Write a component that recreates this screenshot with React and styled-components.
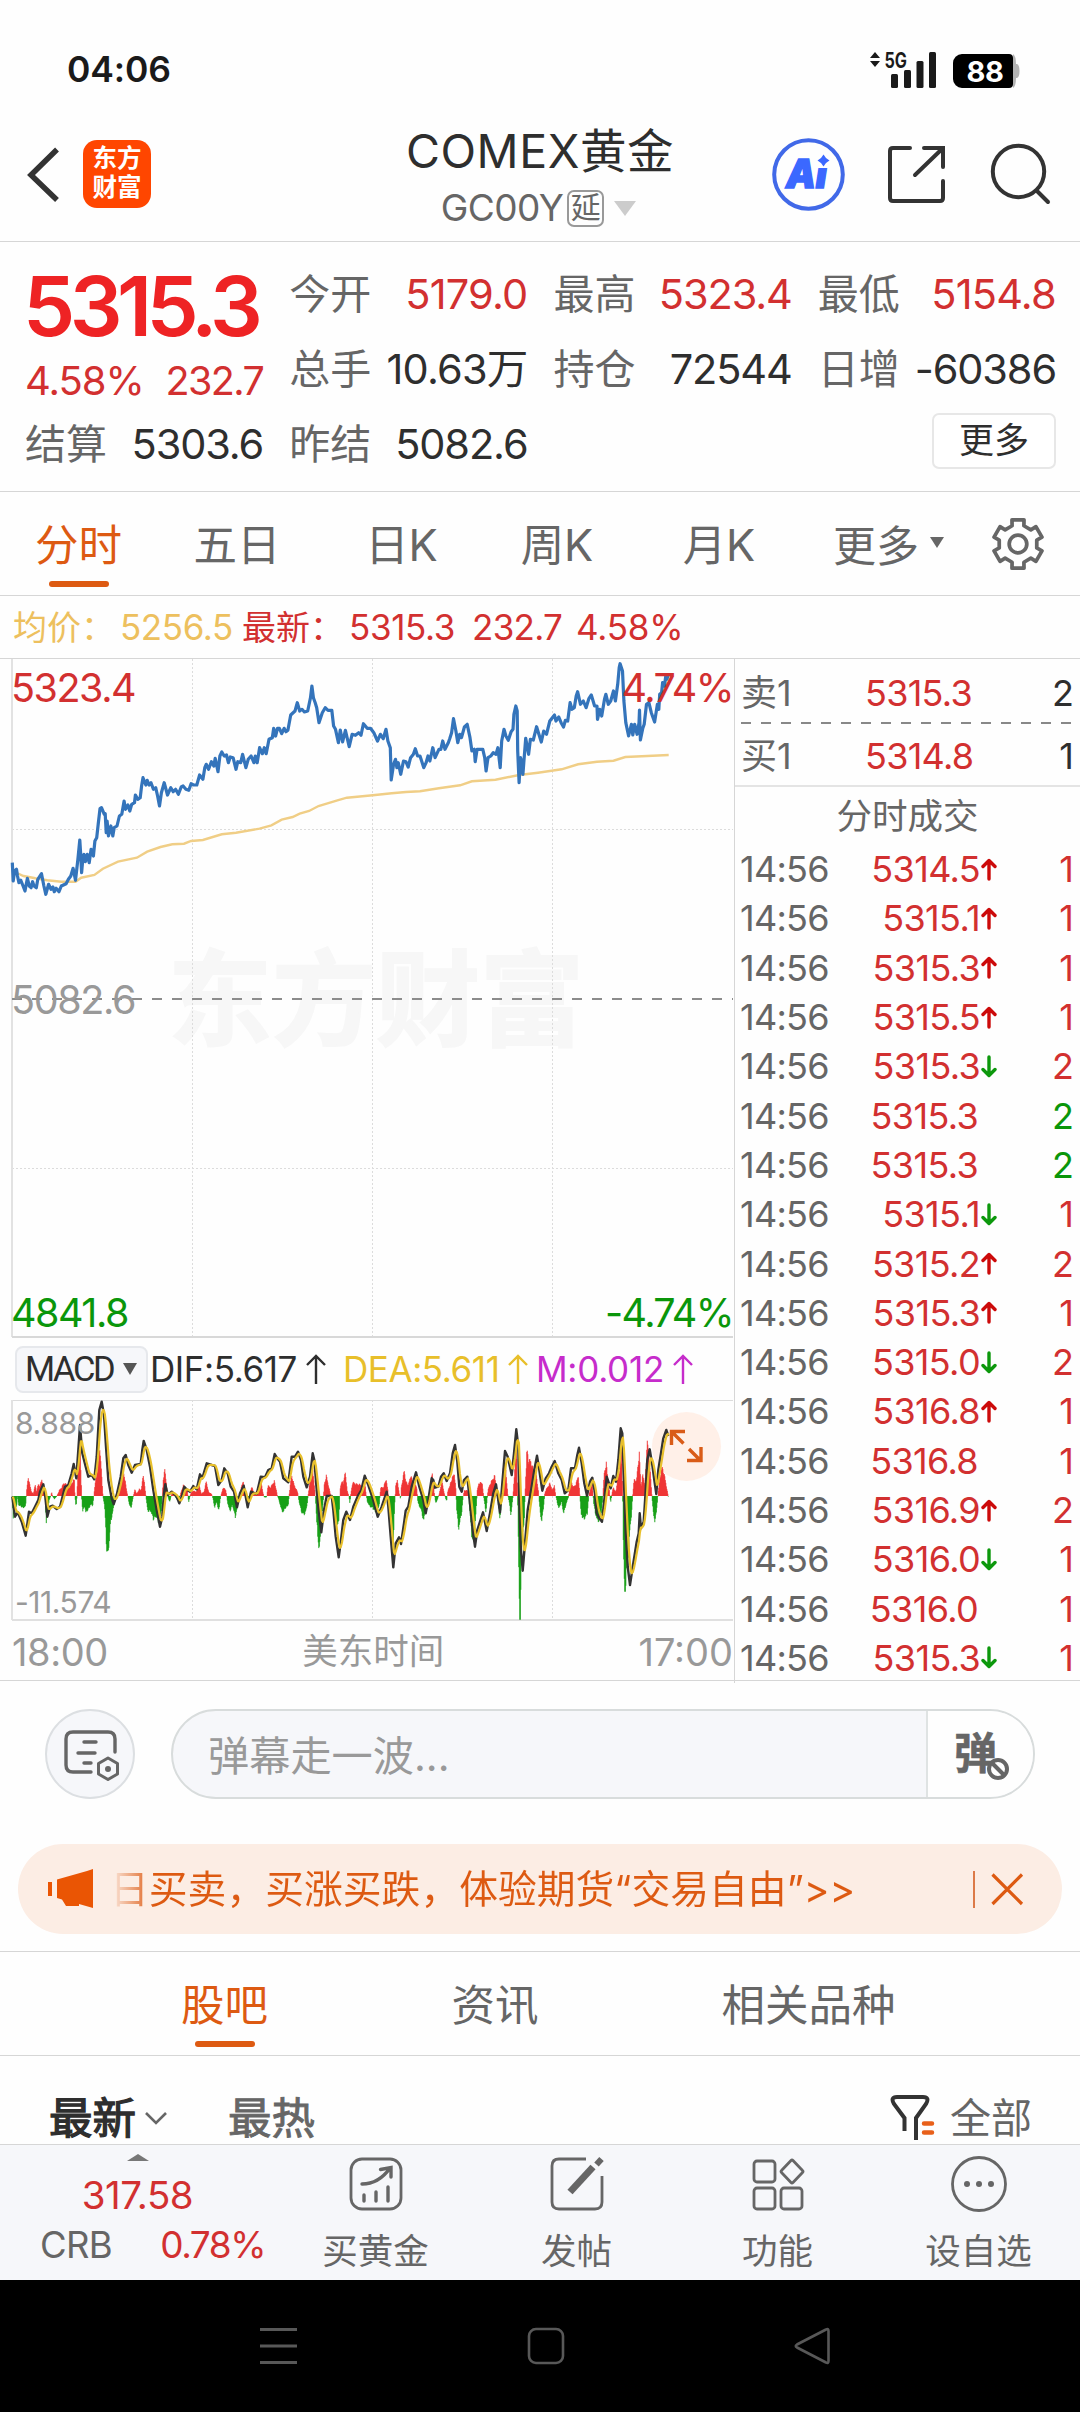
import React from "react";
import styled, { createGlobalStyle } from "styled-components";

const GlobalStyle = createGlobalStyle`
  * { box-sizing: border-box; }
  body { margin: 0; background: #fefefe; }
`;

const RED = "#d23030";
const GREEN = "#0a960a";
const ORANGE = "#dd5a12";
const INK = "#2e2e2e";
const GREY = "#666";
const LINE = "#d6d6d6";

const Screen = styled.div`
  width: 1080px;
  height: 2412px;
  display: flex;
  flex-direction: column;
  overflow: hidden;
  background: #fefefe;
  color: ${INK};
  font-family: Inter, "Noto Sans CJK SC", sans-serif;
  white-space: nowrap;
`;

const T = styled.span`
  display: block;
  font-size: ${(p) => p.$s}px;
  line-height: ${(p) => p.$lh || Math.round(p.$s * 1.2)}px;
  color: ${(p) => p.$c || "inherit"};
  font-weight: ${(p) => p.$w || 400};
  letter-spacing: ${(p) => (p.$ls === undefined ? 0 : p.$ls)}em;
  -webkit-text-stroke: ${(p) => p.$stroke || 0}px currentColor;
`;

/* status bar */
const StatusBar = styled.div`
  height: 106px;
  padding: 34px 60px 0 67px;
  display: flex;
  justify-content: space-between;
  align-items: flex-start;
`;
const StatusRight = styled.div`
  display: flex;
  align-items: flex-start;
  padding-top: 9px;
`;
const Battery = styled.div`
  width: 60px;
  height: 34px;
  margin-top: 11px;
  margin-left: 17px;
  border-radius: 9px 4px 4px 9px;
  background: #000;
  color: #fff;
  display: flex;
  align-items: center;
  justify-content: center;
  font-size: 29px;
  font-weight: 700;
  letter-spacing: -0.01em;
  padding-left: 4px;
`;
const BatteryTip = styled.svg`
  margin-top: 11px;
`;

/* header */
const Header = styled.header`
  height: 136px;
  border-bottom: 1px solid ${LINE};
  display: grid;
  grid-template-columns: 300px 1fr 300px;
`;
const HeaderLeft = styled.div`
  display: flex;
  padding: 34px 0 0 26px;
`;
const Logo = styled.div`
  width: 68px;
  height: 68px;
  margin-left: 23px;
  border-radius: 14px;
  background: #ff4600;
  color: #fff;
  text-align: center;
  font-size: 24.5px;
  line-height: 29px;
  font-weight: 700;
  padding-top: 4px;
`;
const TitleBlock = styled.div`
  display: flex;
  flex-direction: column;
  align-items: center;
  padding-top: 16px;
`;
const SubTitle = styled.div`
  display: flex;
  align-items: center;
  height: 40px;
  margin-top: 8px;
  padding-right: 3px;
`;
const DelayTag = styled.span`
  width: 37px;
  height: 37px;
  margin: 0 10px 0 4px;
  border: 2px solid #999;
  border-radius: 7px;
  color: ${GREY};
  font-size: 30px;
  line-height: 31px;
  text-align: center;
`;
const Caret = styled.i`
  width: 0;
  height: 0;
  border: ${(p) => p.$x}px solid transparent;
  border-top: ${(p) => p.$y}px solid ${(p) => p.$c};
  border-bottom: 0;
`;
const HeaderRight = styled.div`
  display: flex;
  justify-content: flex-end;
  padding: 32px 28px 0 0;
  svg { flex-shrink: 0; }
`;

/* quote */
const Quote = styled.section`
  height: 250px;
  border-bottom: 1px solid ${LINE};
  padding: 14px 24px 0 25px;
  display: grid;
  grid-template-columns: repeat(4, 1fr);
  grid-template-rows: 75px 75px 75px;
  column-gap: 26px;
`;
const QuoteMain = styled.div`
  grid-row: span 2;
  padding-top: 1px;
`;
const LastPrice = styled(T)`
  margin-left: -2px;
`;
const Between = styled.div`
  display: flex;
  justify-content: space-between;
  align-items: center;
`;
const Cell = styled(Between)`
  height: 75px;
`;
const MoreCell = styled.div`
  grid-column: 4;
  padding-top: 7px;
  display: flex;
  justify-content: flex-end;
`;
const MoreButton = styled.button`
  width: 124px;
  height: 56px;
  padding: 0 0 2px;
  border: 2px solid #e7e7e7;
  border-radius: 7px;
  background: #fff;
  color: ${INK};
  font: 400 35px/50px Inter, "Noto Sans CJK SC", sans-serif;
`;

/* period tabs */
const Tabs = styled.nav`
  height: ${(p) => p.$h}px;
  border-bottom: 1px solid ${LINE};
  display: flex;
`;
const Tab = styled.div`
  width: ${(p) => p.$w}px;
  padding-top: ${(p) => p.$top}px;
  display: flex;
  flex-direction: column;
  align-items: center;
  font-size: 43.5px;
  line-height: 60px;
  color: ${(p) => (p.$on ? ORANGE : GREY)};
  &::after {
    content: "";
    width: 60px;
    height: 6px;
    margin-top: 6px;
    border-radius: 3px;
    background: ${(p) => (p.$on ? ORANGE : "transparent")};
  }
`;
const TabMore = styled.div`
  display: flex;
  align-items: center;
  gap: 11px;
  height: 101px;
  width: 180px;
  padding: 0 0 0 23px;
  font-size: 43px;
  color: ${GREY};
`;
const Gear = styled.svg`
  margin-top: 24px;
`;

/* info line */
const InfoLine = styled.div`
  height: 63px;
  border-bottom: 1px solid ${LINE};
  display: flex;
  align-items: center;
  padding-left: 13px;
`;
const InfoItem = styled(T)`
  width: ${(p) => p.$width}px;
`;

/* market */
const Market = styled.section`
  height: 1022px;
  border-bottom: 1px solid ${LINE};
  display: grid;
  grid-template-columns: 734px 1fr;
`;
const ChartColumn = styled.div`
  display: flex;
  flex-direction: column;
`;
const Pane = styled.div`
  position: relative;
  height: ${(p) => p.$h}px;
`;
const ChartSvg = styled.svg`
  display: block;
  position: relative;
`;
const Mark = styled(T)`
  position: absolute;
  left: ${(p) => (p.$l === undefined ? "auto" : p.$l + "px")};
  right: ${(p) => (p.$r === undefined ? "auto" : p.$r + "px")};
  top: ${(p) => p.$t}px;
`;
const MacdBar = styled.div`
  height: 61px;
  display: flex;
  align-items: center;
  padding: 0 0 1px 15px;
`;
const MacdSelect = styled.div`
  width: 133px;
  height: 47px;
  border: 2px solid #e6e8ec;
  border-radius: 8px;
  background: #f6f7fa;
  display: flex;
  align-items: center;
  gap: 12px;
  padding-left: 8px;
  margin-right: 2px;
`;
const Squeezed = styled(T)`
  width: 86px;
  font-family: Roboto, sans-serif;
`;
const Indicator = styled.div`
  display: flex;
  align-items: center;
  width: ${(p) => p.$width}px;
  color: ${(p) => p.$c};
  gap: 9px;
`;
const TimeAxis = styled(Between)`
  height: 59px;
  padding: 0 1px 0 12px;
`;

/* trades */
const Side = styled.aside`
  border-left: 1px solid ${LINE};
  display: flex;
  flex-direction: column;
`;
const BookRow = styled.div`
  height: ${(p) => p.$h}px;
  display: grid;
  grid-template-columns: 124px 1fr auto;
  align-items: center;
  padding: ${(p) => p.$pt}px 6px 0 6px;
`;
const Dashes = styled.div`
  height: 2px;
  margin: 0 5px 0 6px;
  background: repeating-linear-gradient(90deg, #888 0 10px, transparent 10px 20px);
`;
const TradeTitle = styled(T)`
  border-top: 2px solid #e4e4e4;
  padding-top: 4px;
  height: 60px;
  text-align: center;
`;
const TradeRow = styled.div`
  height: 49.3px;
  display: grid;
  grid-template-columns: 90px 167px 1fr;
  align-items: center;
  padding: 0 6px 0 5px;
`;
const Price = styled.div`
  display: flex;
  justify-content: flex-end;
  align-items: center;
  gap: 1px;
  padding-right: ${(p) => (p.$flat ? 19 : 0)}px;
`;
const Volume = styled(T)`
  text-align: right;
`;

/* comments */
const CommentRow = styled.div`
  height: 163px;
  padding: 28px 45px 0;
  display: flex;
  gap: 36px;
`;
const RoundButton = styled.div`
  width: 90px;
  height: 90px;
  border: 2px solid #dcdfe2;
  border-radius: 50%;
  background: #f6f7fa;
  display: flex;
  align-items: center;
  justify-content: center;
  padding: 2px 0 0 3px;
`;
const InputBox = styled.div`
  flex: 1;
  height: 90px;
  border: 2px solid #d8dcdc;
  border-radius: 45px;
  background: #f6f7fa;
  overflow: hidden;
  display: flex;
`;
const Placeholder = styled.div`
  flex: 1;
  padding-left: 35px;
  font-size: 41.2px;
  line-height: 90px;
  color: #999;
`;
const Toggle = styled.div`
  width: 107px;
  background: #fefefe;
  border-left: 2px solid #dfe3e3;
  display: flex;
  padding: 19px 0 0 26px;
`;
const ToggleSign = styled.svg`
  margin: 27px 0 0 -11px;
`;

/* notice */
const NoticeWrap = styled.div`
  height: 108px;
  padding: 0 18px;
  border-bottom: 1px solid ${LINE};
`;
const Notice = styled.div`
  height: 90px;
  border-radius: 45px;
  background: #fcede4;
  display: flex;
  align-items: center;
  padding: 0 38px 0 29px;
`;
const NoticeText = styled.div`
  flex: 1;
  margin-left: 16px;
  font-size: 38.8px;
  line-height: 60px;
  background: linear-gradient(90deg, #fcede4 0, #dd5a12 44px);
  -webkit-background-clip: text;
  background-clip: text;
  color: transparent;
`;
const NoticeLine = styled.i`
  width: 2px;
  height: 37px;
  background: #dc7a48;
  margin-right: 16px;
`;

/* sort row */
const SortRow = styled.div`
  height: 88px;
  display: flex;
  align-items: center;
  padding: 36px 48px 0 49px;
  overflow: hidden;
`;
const SortChevron = styled.svg`
  margin: 0 60px 0 8px;
`;
const Spacer = styled.i`
  flex: 1;
`;
const FilterIcon = styled.svg`
  margin-right: 14px;
`;

/* bottom bar */
const BottomBar = styled.footer`
  height: 136px;
  border-top: 1px solid ${LINE};
  background: #f6f7fa;
  display: grid;
  grid-template-columns: 275px repeat(4, 201px);
`;
const Ticker = styled.div`
  display: flex;
  flex-direction: column;
  align-items: center;
  padding: 9px 0 0;
`;
const TickerUp = styled.i`
  width: 0;
  height: 0;
  border: 11px solid transparent;
  border-bottom: 7px solid #777;
  border-top: 0;
`;
const TickerRow = styled(Between)`
  width: 225px;
  margin-left: 30px;
`;
const Action = styled.div`
  display: flex;
  flex-direction: column;
  align-items: center;
  padding-top: 11px;
  gap: 14px;
`;
const SystemNav = styled.div`
  flex: 1;
  background: #000;
  display: flex;
  padding: 45px 0 0 257px;
`;
const NavIcon = styled.svg`
  margin-right: ${(p) => p.$gap}px;
`;

/* Samples are stored in thirds of a pixel. */
const price = [26,665,28,720,31,690,35,685,37,705,40,725,44,718,48,732,53,750,58,712,62,735,66,740,69,722,72,735,77,740,80,715,88,698,93,735,97,760,100,745,103,730,108,745,112,738,115,752,119,742,125,752,130,735,140,728,145,715,150,705,155,682,160,718,165,655,169,597,171,640,173,695,176,645,178,640,181,662,185,640,189,665,193,625,198,645,201,600,205,590,208,550,212,503,215,500,221,520,223,518,225,575,227,540,230,585,235,555,239,585,242,560,248,555,253,525,258,520,263,480,266,505,271,492,275,510,279,490,285,485,287,462,292,475,297,470,300,435,303,410,309,432,312,418,316,432,320,425,325,445,330,440,334,465,338,495,342,455,348,425,355,462,362,440,367,452,372,445,378,460,384,438,388,435,394,445,400,448,405,428,410,432,417,432,423,402,430,415,434,380,437,370,442,385,448,362,453,375,456,352,462,392,466,345,470,333,475,345,480,342,484,365,488,348,494,350,500,385,504,362,510,365,514,340,521,380,526,355,532,345,538,365,541,345,545,365,550,320,556,338,560,320,564,338,570,295,577,290,580,262,584,285,588,262,592,262,597,278,602,262,606,272,610,268,616,222,625,210,630,185,635,210,640,205,645,213,652,210,658,170,661,135,664,170,668,185,671,200,676,245,683,215,689,200,695,208,703,208,707,255,711,265,717,305,721,267,726,303,732,268,740,317,746,280,753,283,760,275,765,283,770,248,778,262,785,262,792,275,800,300,806,280,812,293,818,265,822,300,827,320,829,417,834,370,838,355,841,380,844,365,849,400,855,360,860,362,865,378,870,350,876,340,880,323,885,345,890,345,898,380,903,365,907,345,911,360,917,320,922,350,930,325,934,325,938,300,943,325,950,305,953,293,957,275,961,233,966,270,970,305,974,280,978,290,984,258,990,250,996,290,1000,330,1005,325,1007,362,1011,325,1017,325,1023,325,1027,350,1030,390,1034,350,1040,345,1045,335,1051,340,1055,320,1060,380,1063,300,1068,265,1072,285,1077,298,1083,272,1087,265,1089,220,1093,195,1096,210,1097,330,1100,425,1103,350,1106,365,1108,400,1114,292,1120,340,1124,295,1130,297,1137,257,1142,280,1147,303,1152,270,1158,280,1165,240,1175,222,1178,240,1184,228,1189,245,1194,258,1198,238,1203,240,1208,185,1212,205,1217,200,1221,165,1224,152,1230,190,1236,180,1242,200,1248,172,1253,162,1260,195,1265,195,1266,235,1271,205,1275,225,1281,175,1284,160,1289,190,1294,180,1300,150,1304,180,1309,130,1312,80,1314,68,1319,90,1322,180,1326,245,1332,285,1338,250,1341,282,1345,250,1350,280,1354,245,1355,207,1357,297,1362,262,1365,250,1370,190,1375,185,1380,215,1387,243,1393,190,1396,205,1398,160,1402,155,1404,125,1408,135,1411,102,1413,115,1417,98];
const average = [26,690,50,705,75,712,100,718,130,722,160,722,172,710,200,702,218,683,250,662,290,650,312,632,340,618,365,610,390,608,405,600,430,597,470,580,500,575,550,563,575,553,597,536,620,528,635,518,655,510,675,495,715,478,735,470,790,463,830,457,860,453,890,451,930,442,975,433,1000,421,1050,416,1100,402,1140,395,1190,385,1225,370,1265,362,1300,359,1325,348,1360,346,1417,342];

const difLine = [37,320,45,380,53,367,65,395,77,437,87,365,95,370,105,350,115,330,120,305,130,283,136,320,142,380,150,350,158,347,170,357,180,350,195,290,205,285,215,250,221,222,229,265,235,180,240,105,247,190,257,230,265,260,275,255,283,268,290,200,298,60,305,35,312,75,318,170,325,270,335,325,341,342,350,315,362,260,370,205,377,195,385,225,395,248,405,225,422,222,427,180,431,153,440,180,450,230,460,300,470,360,480,410,487,380,492,310,496,283,503,315,515,305,530,320,538,340,545,320,553,290,562,300,570,305,580,288,590,298,600,253,607,265,620,220,635,225,645,228,655,285,665,270,673,235,683,250,692,290,702,305,711,352,720,310,731,287,743,352,753,305,770,312,782,260,795,262,805,240,815,235,824,192,832,205,840,215,850,265,865,277,875,200,885,200,894,185,903,210,910,260,920,292,930,260,938,190,943,210,950,300,957,370,964,427,972,360,980,318,995,318,1000,360,1007,440,1016,502,1023,450,1030,390,1039,365,1050,390,1060,350,1075,315,1084,300,1094,257,1105,285,1118,325,1133,380,1145,350,1160,305,1165,350,1172,440,1180,532,1187,460,1197,442,1203,462,1212,400,1217,362,1225,350,1235,290,1248,247,1258,290,1270,330,1277,370,1285,330,1295,265,1300,270,1305,293,1315,290,1323,260,1331,250,1340,273,1350,250,1358,190,1365,165,1372,215,1378,290,1385,305,1392,270,1402,260,1410,340,1418,420,1425,470,1432,420,1440,395,1449,367,1460,423,1470,370,1480,310,1488,283,1495,330,1500,367,1507,280,1515,183,1523,200,1535,255,1542,190,1549,118,1555,170,1558,330,1562,470,1568,542,1575,460,1583,360,1595,290,1603,240,1611,197,1618,240,1627,302,1637,265,1647,250,1655,230,1664,213,1675,250,1685,270,1694,310,1705,300,1713,235,1725,235,1732,195,1737,173,1745,220,1753,280,1761,317,1770,275,1777,263,1785,310,1790,370,1798,385,1806,395,1813,330,1820,260,1832,295,1840,258,1848,275,1855,210,1862,115,1867,130,1872,280,1877,430,1883,530,1890,585,1900,520,1910,455,1916,430,1919,370,1923,415,1931,395,1937,300,1942,210,1949,178,1957,225,1963,270,1969,312,1975,240,1983,190,1990,145,1999,120,2005,138];
const histogram = [37,319,40,390,45,345,50,355,52,320,57,350,68,355,77,352,79,320,81,290,85,255,88,275,95,305,100,310,106,283,110,305,115,280,120,285,126,262,130,290,134,310,136,330,139,405,143,360,148,330,152,320,155,305,158,319,163,328,170,320,178,300,185,290,192,275,200,280,210,290,218,270,223,265,225,320,228,355,231,320,233,250,240,120,243,250,245,320,248,370,254,350,258,375,265,360,272,345,278,350,281,325,284,290,290,250,299,175,304,230,309,319,314,350,320,485,326,480,332,400,340,360,347,320,352,310,360,275,372,245,380,300,384,319,388,345,393,360,400,320,405,295,410,312,418,295,423,300,430,250,437,310,440,340,445,370,452,365,460,395,467,380,475,400,483,380,487,320,490,260,495,230,500,290,503,310,506,330,510,335,515,310,520,305,528,325,537,335,542,310,550,283,556,290,562,300,566,338,572,310,580,300,588,305,597,283,604,310,612,305,619,270,626,305,635,312,640,330,644,358,650,335,656,370,662,320,670,290,678,300,683,340,690,370,697,345,706,385,713,350,718,325,724,290,729,270,735,305,742,350,748,325,755,285,762,310,772,300,782,260,788,300,792,322,800,322,804,285,812,290,823,268,832,315,838,335,845,365,850,370,858,355,865,345,868,310,875,250,882,280,893,305,898,340,905,370,912,380,920,360,924,320,930,270,938,235,944,290,947,330,950,400,957,480,964,410,970,330,973,280,979,252,985,280,992,315,996,330,1002,370,1010,410,1017,400,1020,300,1025,270,1030,280,1035,238,1042,300,1047,320,1050,345,1052,315,1058,275,1070,280,1080,280,1088,290,1094,265,1098,310,1102,335,1108,350,1118,358,1130,370,1138,345,1142,290,1150,290,1158,265,1164,300,1167,340,1173,380,1180,480,1184,350,1188,275,1192,270,1198,310,1202,330,1204,290,1208,265,1213,235,1218,270,1225,285,1232,252,1240,275,1250,285,1254,340,1263,360,1271,397,1280,355,1288,330,1291,290,1297,240,1302,300,1307,342,1313,328,1318,310,1326,270,1333,310,1340,337,1344,300,1352,275,1363,245,1368,300,1370,360,1376,425,1385,375,1389,325,1393,300,1403,300,1407,330,1415,440,1422,455,1428,370,1432,300,1437,275,1447,275,1451,320,1458,370,1464,300,1470,280,1477,265,1484,250,1491,300,1494,340,1500,390,1506,330,1508,260,1512,190,1518,240,1523,310,1528,340,1533,380,1539,320,1544,240,1549,130,1553,320,1556,500,1559,689,1561,689,1565,450,1572,420,1575,320,1578,240,1581,175,1586,210,1592,205,1597,225,1608,240,1615,300,1619,350,1625,403,1631,350,1635,305,1642,290,1650,275,1656,300,1663,285,1668,320,1672,340,1677,360,1685,335,1691,375,1698,345,1706,320,1710,260,1720,290,1728,280,1735,252,1740,320,1744,385,1752,390,1762,375,1767,310,1772,295,1777,275,1781,340,1786,370,1793,400,1802,390,1808,330,1812,250,1819,215,1824,270,1828,300,1832,340,1836,310,1840,290,1848,305,1852,270,1860,230,1864,160,1868,300,1870,450,1874,605,1877,605,1880,500,1883,545,1888,440,1893,400,1898,320,1902,265,1908,270,1912,240,1918,185,1923,290,1928,250,1935,280,1942,152,1948,200,1954,290,1958,350,1965,408,1972,340,1975,300,1980,260,1987,225,1995,260,2000,290,2005,320];

const pairs = (flat, sx, sy, dy) => {
  const out = [];
  for (let i = 0; i < flat.length; i += 2) out.push([flat[i] / sx, flat[i + 1] / sy + dy]);
  return out;
};
const toPath = (pts) => "M" + pts.map(([x, y]) => `${x.toFixed(1)} ${y.toFixed(1)}`).join("L");
const sample = (pts, step) => {
  const out = [];
  let k = 0;
  for (let x = pts[0][0]; x <= pts[pts.length - 1][0]; x += step) {
    while (k < pts.length - 2 && pts[k + 1][0] < x) k += 1;
    const [x0, y0] = pts[k];
    const [x1, y1] = pts[k + 1];
    out.push([x, y0 + ((y1 - y0) * (x - x0)) / (x1 - x0)]);
  }
  return out;
};
const smooth = (pts, a) => {
  let v = pts[0][1];
  return pts.map(([x, y]) => {
    v += (y - v) * a;
    return [x, v];
  });
};

const ZERO = 96;
const pricePath = toPath(pairs(price, 2.119, 3, -18));
const avgPath = toPath(pairs(average, 2.119, 3, -18));
const difPts = pairs(difLine, 3, 3, -10);
const difPath = toPath(difPts);
const deaPath = toPath(smooth(sample(difPts, 1), 0.42).map(([x, y]) => [x + 0.6, y]));
const bars = sample(pairs(histogram, 3, 3, -10), 0.5).map(([x, y], i) => {
  const wobble = Math.abs(y - ZERO) > 40 ? 1 : 1 - (((i >> 1) * 37) % 11) / 60;
  return [x, ZERO + (y - ZERO) * wobble];
});
const barPath = (up) =>
  bars
    .filter(([, y]) => (up ? y < ZERO - 0.5 : y > ZERO + 0.5))
    .map(([x, y]) => `M${x.toFixed(1)} ${ZERO}V${y.toFixed(1)}`)
    .join("");

/* The digit 1 is drawn narrow, so numbers holding it are spaced a little wider. */
const spacing = (text, base = -0.027) => base + 0.008 * (text.split("1").length - 1);

const Grid = ({ h }) => (
  <g stroke="#dcdcdc" strokeWidth="1" strokeDasharray="2 2">
    {[192.5, 372.5, 552.5].map((x) => (
      <path key={x} d={`M${x} 0V${h}`} />
    ))}
  </g>
);

const PriceChart = () => (
  <Pane $h={680}>
    <Mark $s={104} $lh={120} $w={700} $stroke={2} $c="#f7f7f7" $l={168} $t={281}>东方财富</Mark>
    <ChartSvg width="734" height="680">
      <Grid h={678} />
      <path d="M12 170.5H733M12 509.5H733" stroke="#dcdcdc" strokeDasharray="2 2" />
      <path d="M12 0V678" stroke="#e2e2e2" strokeWidth="2" />
      <path d="M12 678H733" stroke="#d8d8d8" strokeWidth="2" />
      <path d="M12 340H733" stroke="#8c8c8c" strokeWidth="2" strokeDasharray="10 10" />
      <path d={avgPath} fill="none" stroke="#f0ce86" strokeWidth="2.4" />
      <path d={pricePath} fill="none" stroke="#3474bb" strokeWidth="3.2" strokeLinejoin="round" />
    </ChartSvg>
    <Mark $s={39.5} $lh={48} $ls={-0.037} $c={RED} $l={11} $t={5}>5323.4</Mark>
    <Mark $s={39.5} $lh={48} $ls={-0.04} $c={RED} $r={1} $t={5}>4.74%</Mark>
    <Mark $s={39.5} $lh={48} $ls={-0.035} $c="#999" $l={11} $t={317}>5082.6</Mark>
    <Mark $s={39.5} $lh={48} $ls={-0.037} $c={GREEN} $l={11} $t={630}>4841.8</Mark>
    <Mark $s={39.5} $lh={48} $ls={-0.04} $c={GREEN} $r={1} $t={630}>-4.74%</Mark>
  </Pane>
);

const MacdChart = () => (
  <Pane $h={222}>
    <ChartSvg width="734" height="222">
      <Grid h={220} />
      <path d="M12 .5H733" stroke="#dcdcdc" />
      <path d="M12 0V220" stroke="#e2e2e2" strokeWidth="2" />
      <path d="M12 220H733" stroke="#e0e0e0" strokeWidth="2" />
      <circle cx="686.500" cy="46.500" r="34.500" fill="#fff0e8" />
      <path d={barPath(true)} stroke="#ee2a2a" strokeWidth="0.9" />
      <path d={barPath(false)} stroke="#0a9a0a" strokeWidth="0.9" />
      <path d={difPath} fill="none" stroke="#333" strokeWidth="2.4" strokeLinejoin="round" />
      <path d={deaPath} fill="none" stroke="#e8c02c" strokeWidth="2.2" strokeLinejoin="round" />
      <path
        d="M671.500 45V31.500H685M672 32L683.500 43.500M701 47V60.500H687M689 49L700 60"
        fill="none"
        stroke="#d95c18"
        strokeWidth="3.400"
      />
    </ChartSvg>
    <Mark $s={30} $lh={36} $ls={-0.01} $c="#999" $l={15} $t={5}>8.888</Mark>
    <Mark $s={30} $lh={36} $ls={-0.015} $c="#999" $l={15} $t={184}>-11.574</Mark>
  </Pane>
);

const UpArrow = () => (
  <svg width="20" height="30" viewBox="0 0 20 30" fill="none" stroke="currentColor" strokeWidth="2.4">
    <path d="M10 30V2M1 11L10 2L19 11" />
  </svg>
);

const TickArrow = ({ dir }) => (
  <svg width="16" height="24" viewBox="0 0 16 24" fill="none" stroke={dir === "up" ? "#cc0a0a" : "#0c980c"} strokeWidth="3.4">
    <path
      strokeLinejoin="round"
      strokeLinecap="round"
      d={dir === "up" ? "M8 21V3M2 8.500L8 2.500L14 8.500" : "M8 2V20M2 14.500L8 20.500L14 14.500"}
    />
  </svg>
);

const trades = [
  ["5314.5", "up", 1], ["5315.1", "up", 1], ["5315.3", "up", 1], ["5315.5", "up", 1],
  ["5315.3", "down", 2], ["5315.3", "", 2, true], ["5315.3", "", 2, true], ["5315.1", "down", 1],
  ["5315.2", "up", 2], ["5315.3", "up", 1], ["5315.0", "down", 2], ["5316.8", "up", 1],
  ["5316.8", "", 1], ["5316.9", "up", 2], ["5316.0", "down", 1], ["5316.0", "", 1], ["5315.3", "down", 1],
];

const quoteCells = [
  ["今开", "5179.0", RED], ["最高", "5323.4", RED], ["最低", "5154.8", RED],
  ["总手", "10.63万", INK], ["持仓", "72544", INK], ["日增", "-60386", INK],
  ["结算", "5303.6", INK], ["昨结", "5082.6", INK],
];

const actions = [
  ["买黄金", <g key="a"><rect x="2" y="2" width="50" height="50" rx="11" /><path d="M13 27C24 27 34 21 41 11M31.500 12.500L42 10.500V20M15 38V44M27 35V44M39 30V44" strokeWidth="3.400" strokeLinecap="round" /></g>],
  ["发帖", <g key="b"><path d="M36 2H9Q2 2 2 9V45Q2 52 9 52H45Q52 52 52 45V19" /><path d="M20 35L43 10" strokeWidth="7" /><path d="M46.500 7.500L51.500 2" strokeWidth="6" /></g>],
  ["功能", <g key="c"><rect x="3" y="4" width="21" height="21" rx="3" /><rect x="3" y="31" width="21" height="21" rx="3" /><rect x="30" y="31" width="21" height="21" rx="3" /><path d="M40 3.500Q41 2.500 42 3.500L51.500 13.500Q52.500 14.500 51.500 15.500L42 25.500Q41 26.500 40 25.500L30.500 15.500Q29.500 14.500 30.500 13.500Z" /></g>],
  ["设自选", <g key="d"><circle cx="27" cy="27" r="26.500" /><g fill="#666" stroke="none"><circle cx="15" cy="27" r="3" /><circle cx="27" cy="27" r="3" /><circle cx="39" cy="27" r="3" /></g></g>],
];

const gearPath = (() => {
  const pts = [];
  for (let i = 0; i < 6; i += 1) {
    const c = -90 + i * 60;
    [[-14, 24], [14, 24], [18, 18.5], [42, 18.5]].forEach(([d, r]) => {
      const t = ((c + d) * Math.PI) / 180;
      pts.push([27 + r * Math.cos(t), 27 + r * Math.sin(t)]);
    });
  }
  return toPath(pts) + "Z";
})();

export default function App() {
  return (
    <Screen>
      <GlobalStyle />
      <StatusBar>
        <T $s={35.5} $lh={72} $w={600} $c="#1a1a1a" $ls={-0.003}>04:06</T>
        <StatusRight>
          <svg width="68" height="46" viewBox="0 -8 68 46" fill="#1a1a1a">
            <path d="M2 7L7 1L12 7ZM2 10L7 16L12 10Z" />
            <text x="16.500" y="16.500" fontFamily="Inter, sans-serif" fontWeight="700" fontSize="21" textLength="22.500" lengthAdjust="spacingAndGlyphs">5G</text>
            <rect x="23" y="23" width="7" height="14" rx="1.500" />
            <rect x="36" y="19" width="7" height="18" rx="1.500" />
            <rect x="48.500" y="10" width="7" height="27" rx="1.500" />
            <rect x="61" y="1" width="7" height="36" rx="1.500" />
          </svg>
          <Battery>88</Battery>
          <BatteryTip width="7" height="34" fill="#b4b4b4">
            <path d="M0 0Q3 2 3 10H4Q6.500 11 6.500 17Q6.500 23 4 24H3Q3 32 0 34Z" />
          </BatteryTip>
        </StatusRight>
      </StatusBar>

      <Header>
        <HeaderLeft>
          <svg width="34" height="68" fill="none" stroke="#333" strokeWidth="5.500">
            <path d="M31 9.500L5 35L31 60" />
          </svg>
          <Logo>东方<br />财富</Logo>
        </HeaderLeft>
        <TitleBlock>
          <T $s={46.5} $lh={58} $ls={0.012}>COMEX黄金</T>
          <SubTitle>
            <T $s={37} $lh={40} $c={GREY} $ls={-0.015}>GC00Y</T>
            <DelayTag>延</DelayTag>
            <Caret $x={11} $y={15} $c="#ccc" />
          </SubTitle>
        </TitleBlock>
        <HeaderRight>
          <svg width="280" height="74" viewBox="0 0 280 74" fill="none" stroke="#333" strokeWidth="4">
            <circle cx="36.500" cy="36.500" r="34.300" stroke="#4169e8" />
            <text x="14" y="50" fill="#3b68ff" stroke="#3b68ff" strokeWidth="1.500" fontFamily="Inter, sans-serif" fontWeight="900" fontStyle="italic" fontSize="40" textLength="41" lengthAdjust="spacingAndGlyphs">Ai</text>
            <rect x="43" y="15" width="17" height="15" fill="#fefefe" stroke="none" />
            <path d="M51.500 16.500L54 20L57.500 22.500L54 25L51.500 28.500L49 25L45.500 22.500L49 20Z" fill="#3b68ff" stroke="none" />
            <path d="M138 10H121Q118 10 118 13V60Q118 63 121 63H168Q171 63 171 60V43M152 10H171V29M170 11L143 37" strokeLinecap="round" />
            <circle cx="246.500" cy="33.500" r="25.700" />
            <path d="M265 53L276 64" strokeLinecap="round" />
          </svg>
        </HeaderRight>
      </Header>

      <Quote>
        <QuoteMain>
          <LastPrice $s={83} $lh={98} $w={600} $c="#ee2324" $ls={-0.067}>5315.3</LastPrice>
          <Between>
            <T $s={40} $lh={52} $c={RED} $ls={-0.025}>4.58%</T>
            <T $s={39.5} $lh={52} $c={RED} $ls={-0.04}>232.7</T>
          </Between>
        </QuoteMain>
        {quoteCells.map(([label, value, color]) => (
          <Cell key={label}>
            <T $s={41} $lh={60} $c={GREY}>{label}</T>
            <T $s={41.5} $lh={60} $c={color} $ls={spacing(value)}>{value}</T>
          </Cell>
        ))}
        <MoreCell><MoreButton>更多</MoreButton></MoreCell>
      </Quote>

      <Tabs $h={104}>
        <Tab $w={157} $top={23} $on>分时</Tab>
        <Tab $w={160} $top={23}>五日</Tab>
        <Tab $w={169} $top={23}>日K</Tab>
        <Tab $w={142} $top={23}>周K</Tab>
        <Tab $w={182} $top={23}>月K</Tab>
        <TabMore>更多<Caret $x={7.5} $y={11} $c="#666" /></TabMore>
        <Gear width="56" height="56" viewBox="0 0 54 54" fill="none" stroke="#666" strokeWidth="3.600">
          <path d={gearPath} strokeLinejoin="round" />
          <circle cx="27" cy="27" r="8.500" />
        </Gear>
      </Tabs>

      <InfoLine>
        <InfoItem $s={34} $c="#edc05e" $width={107}>均价：</InfoItem>
        <InfoItem $s={35} $c="#edc05e" $ls={-0.012} $width={122}>5256.5</InfoItem>
        <InfoItem $s={34} $c={RED} $width={107}>最新：</InfoItem>
        <InfoItem $s={35} $c={RED} $ls={-0.01} $width={123}>5315.3</InfoItem>
        <InfoItem $s={35} $c={RED} $ls={-0.02} $width={104}>232.7</InfoItem>
        <InfoItem $s={35} $c={RED} $ls={-0.005} $width={110}>4.58%</InfoItem>
      </InfoLine>

      <Market>
        <ChartColumn>
          <PriceChart />
          <MacdBar>
            <MacdSelect>
              <Squeezed $s={34.5} $ls={-0.07}>MACD</Squeezed>
              <Caret $x={7.5} $y={12} $c="#555" />
            </MacdSelect>
            <Indicator $c={INK} $width={193}><T $s={35} $ls={-0.012}>DIF:5.617</T><UpArrow /></Indicator>
            <Indicator $c="#e8bf2a" $width={193}><T $s={35} $ls={-0.012}>DEA:5.611</T><UpArrow /></Indicator>
            <Indicator $c="#c62ccb" $width={170}><T $s={35} $ls={-0.007}>M:0.012</T><UpArrow /></Indicator>
          </MacdBar>
          <MacdChart />
          <TimeAxis>
            <T $s={38} $c="#999" $ls={-0.01}>18:00</T>
            <T $s={35.5} $c="#999">美东时间</T>
            <T $s={38} $c="#999" $ls={0}>17:00</T>
          </TimeAxis>
        </ChartColumn>
        <Side>
          <BookRow $h={63} $pt={6}>
            <T $s={36} $c={GREY}>卖1</T>
            <T $s={36} $c={RED} $ls={-0.02}>5315.3</T>
            <T $s={36}>2</T>
          </BookRow>
          <Dashes />
          <BookRow $h={61} $pt={4}>
            <T $s={36} $c={GREY}>买1</T>
            <T $s={36} $c={RED} $ls={-0.02}>5314.8</T>
            <T $s={36}>1</T>
          </BookRow>
          <TradeTitle $s={35.5} $lh={52} $c={GREY}>分时成交</TradeTitle>
          {trades.map(([p, dir, v, sell], i) => (
            <TradeRow key={i}>
              <T $s={36} $c={GREY} $ls={-0.02}>14:56</T>
              <Price $flat={!dir}>
                <T $s={36} $c={RED} $ls={-0.018}>{p}</T>
                {dir ? <TickArrow dir={dir} /> : null}
              </Price>
              <Volume $s={36} $c={sell ? GREEN : RED}>{v}</Volume>
            </TradeRow>
          ))}
        </Side>
      </Market>

      <CommentRow>
        <RoundButton>
          <svg width="56" height="52" viewBox="0 0 56 52" fill="none" stroke="#666" strokeWidth="3.400" strokeLinecap="round">
            <path d="M27 43H9Q2 43 2 36V10Q2 3 9 3H44Q51 3 51 10V23M20 13H32M14 24H31M20 34H27" />
            <path d="M44 29L53.500 34.500V45L44 50.500L34.500 45V34.500Z" strokeWidth="3" strokeLinejoin="round" />
            <circle cx="44" cy="40" r="3" fill="#666" stroke="none" />
          </svg>
        </RoundButton>
        <InputBox>
          <Placeholder>弹幕走一波...</Placeholder>
          <Toggle>
            <T $s={43} $lh={46} $w={700} $c={GREY} $stroke={0.6}>弹</T>
            <ToggleSign width="24" height="24" viewBox="0 0 24 24" fill="#fefefe" stroke="#666" strokeWidth="4">
              <circle cx="12" cy="12" r="9" />
              <path d="M6 6L18 18" />
            </ToggleSign>
          </Toggle>
        </InputBox>
      </CommentRow>

      <NoticeWrap>
        <Notice>
          <svg width="47" height="42" viewBox="0 0 47 42" fill="#ea5504">
            <path d="M1 14H5V28H1ZM10 11.500L40 3L46 1V40L32 36V38H19L15 31.500L10 30Z" />
          </svg>
          <NoticeText>日买卖，买涨买跌，体验期货“交易自由”&gt;&gt;</NoticeText>
          <NoticeLine />
          <svg width="33" height="33" fill="none" stroke={ORANGE} strokeWidth="3.200">
            <path d="M1.500 1.500L31 31M31 1.500L1.500 31" />
          </svg>
        </Notice>
      </NoticeWrap>

      <Tabs $h={104}>
        <Tab $w={449} $top={23} $on>股吧</Tab>
        <Tab $w={92} $top={23}>资讯</Tab>
        <Tab $w={535} $top={23}>相关品种</Tab>
      </Tabs>

      <SortRow>
        <T $s={43.5} $lh={56} $stroke={1.3}>最新</T>
        <SortChevron width="24" height="16" fill="none" stroke="#666" strokeWidth="2.600">
          <path d="M2 3L12 13L22 3" />
        </SortChevron>
        <T $s={43.5} $lh={56} $stroke={0.9} $c={GREY}>最热</T>
        <Spacer />
        <FilterIcon width="46" height="48" viewBox="0 0 46 48" fill="none" stroke="#333" strokeWidth="4">
          <path d="M14.500 37V24L4 10Q0 3 7 3H33Q40 3 36 10L26 24V46" />
          <path d="M34 29.500H42M34 38.500H42" stroke="#e8601a" strokeWidth="4.500" strokeLinecap="round" />
        </FilterIcon>
        <T $s={41} $lh={56} $c={GREY}>全部</T>
      </SortRow>

      <BottomBar>
        <Ticker>
          <TickerUp />
          <T $s={38.5} $lh={68} $c={RED} $ls={-0.012}>317.58</T>
          <TickerRow>
            <T $s={36.5} $lh={32} $c={GREY} $ls={-0.02}>CRB</T>
            <T $s={37} $lh={32} $c={RED} $ls={-0.04}>0.78%</T>
          </TickerRow>
        </Ticker>
        {actions.map(([label, icon]) => (
          <Action key={label}>
            <svg width="56" height="56" viewBox="-1 -1 56 56" fill="none" stroke="#666" strokeWidth="2.800">{icon}</svg>
            <T $s={35.5} $lh={52} $c={GREY}>{label}</T>
          </Action>
        ))}
      </BottomBar>

      <SystemNav>
        <NavIcon width="42" height="42" $gap={226} stroke="#585858" strokeWidth="3">
          <path d="M3 4.500H40M3 21H40M3 37.500H40" />
        </NavIcon>
        <NavIcon width="42" height="42" $gap={225} fill="none" stroke="#585858" strokeWidth="2.600">
          <rect x="4" y="4" width="34" height="34" rx="7" />
        </NavIcon>
        <NavIcon width="42" height="42" $gap={0} fill="none" stroke="#585858" strokeWidth="2.600">
          <path d="M34 4.500Q36.500 3 36.500 6V36Q36.500 39 34 37.500L5 22.500Q2.500 21 5 19.500Z" />
        </NavIcon>
      </SystemNav>
    </Screen>
  );
}
